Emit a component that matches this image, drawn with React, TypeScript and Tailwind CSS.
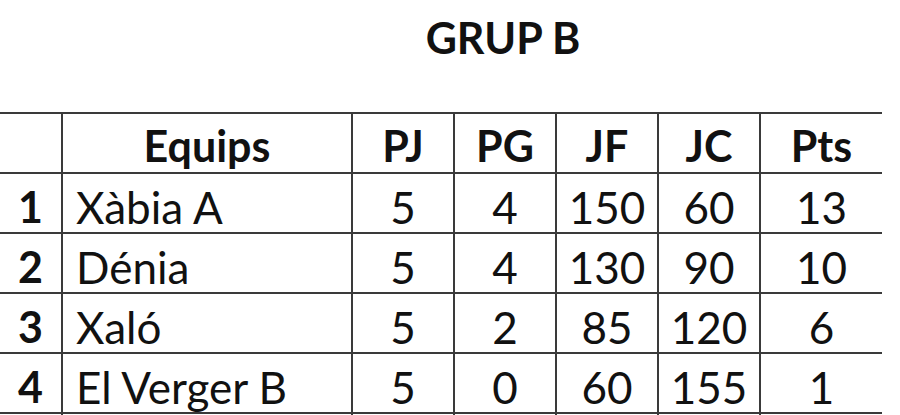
const rows = [
  { pos: 1, team: "Xàbia A", pj: 5, pg: 4, jf: 150, jc: 60, pts: 13 },
  { pos: 2, team: "Dénia", pj: 5, pg: 4, jf: 130, jc: 90, pts: 10 },
  { pos: 3, team: "Xaló", pj: 5, pg: 2, jf: 85, jc: 120, pts: 6 },
  { pos: 4, team: "El Verger B", pj: 5, pg: 0, jf: 60, jc: 155, pts: 1 },
];

const cols = "grid grid-cols-[63px_290px_102px_102px_102px_102px_121px]";

export default function App() {
  return (
    <div
      className="w-[900px] h-[415px] bg-white text-[#111] overflow-hidden"
      style={{ fontFamily: "Lato, 'Open Sans', sans-serif" }}
    >
      <h1 className="w-[882px] pl-[124px] pt-[14px] h-[112px] text-center text-[43px] font-bold leading-[48px]">
        GRUP B
      </h1>

      <div className="w-[882px] border-t-2 border-[#3a3a3a]">
        <div className={`${cols} h-[60px] border-b-2 border-[#3a3a3a] font-bold text-[43px]`}>
          <div className="border-r-2 border-[#3a3a3a]" />
          <div className="border-r-2 border-[#3a3a3a] flex items-center justify-center">Equips</div>
          <div className="border-r-2 border-[#3a3a3a] flex items-center justify-center">PJ</div>
          <div className="border-r-2 border-[#3a3a3a] flex items-center justify-center">PG</div>
          <div className="border-r-2 border-[#3a3a3a] flex items-center justify-center">JF</div>
          <div className="border-r-2 border-[#3a3a3a] flex items-center justify-center">JC</div>
          <div className="flex items-center justify-center">Pts</div>
        </div>
        {rows.map((r) => (
          <div key={r.pos} className={`${cols} h-[60px] border-b-2 border-[#3a3a3a] text-[44px]`}>
            <div className="border-r-2 border-[#3a3a3a] flex items-center justify-center font-bold text-[43px]">{r.pos}</div>
            <div className="border-r-2 border-[#3a3a3a] flex items-center pl-[13px]">{r.team}</div>
            <div className="border-r-2 border-[#3a3a3a] flex items-center justify-center">{r.pj}</div>
            <div className="border-r-2 border-[#3a3a3a] flex items-center justify-center">{r.pg}</div>
            <div className="border-r-2 border-[#3a3a3a] flex items-center justify-center">{r.jf}</div>
            <div className="border-r-2 border-[#3a3a3a] flex items-center justify-center">{r.jc}</div>
            <div className="flex items-center justify-center">{r.pts}</div>
          </div>
        ))}
      </div>
    </div>
  );
}
